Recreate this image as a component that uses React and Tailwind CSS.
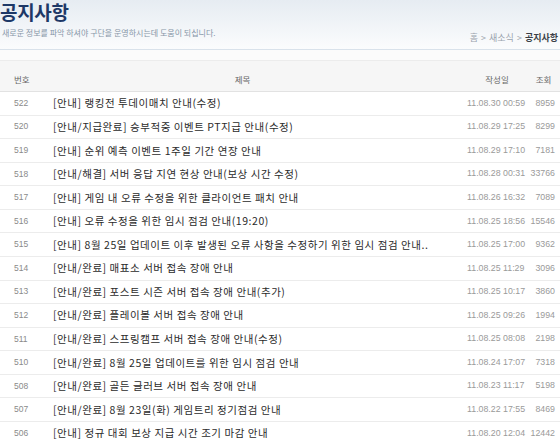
const rows = [
  ["522", "[안내] 랭킹전 투데이매치 안내(수정)", "11.08.30 00:59", "8959"],
  ["520", "[안내/지급완료] 승부적중 이벤트 PT지급 안내(수정)", "11.08.29 17:25", "8299"],
  ["519", "[안내] 순위 예측 이벤트 1주일 기간 연장 안내", "11.08.29 17:10", "7181"],
  ["518", "[안내/해결] 서버 응답 지연 현상 안내(보상 시간 수정)", "11.08.28 00:31", "33766"],
  ["517", "[안내] 게임 내 오류 수정을 위한 클라이언트 패치 안내", "11.08.26 16:32", "7089"],
  ["516", "[안내] 오류 수정을 위한 임시 점검 안내(19:20)", "11.08.25 18:56", "15546"],
  ["515", "[안내] 8월 25일 업데이트 이후 발생된 오류 사항을 수정하기 위한 임시 점검 안내..", "11.08.25 17:00", "9362"],
  ["514", "[안내/완료] 매표소 서버 접속 장애 안내", "11.08.25 11:29", "3096"],
  ["513", "[안내/완료] 포스트 시즌 서버 접속 장애 안내(추가)", "11.08.25 10:17", "3860"],
  ["512", "[안내/완료] 플레이볼 서버 접속 장애 안내", "11.08.25 09:26", "1994"],
  ["511", "[안내/완료] 스프링캠프 서버 접속 장애 안내(수정)", "11.08.25 08:08", "2198"],
  ["510", "[안내/완료] 8월 25일 업데이트를 위한 임시 점검 안내", "11.08.24 17:07", "7318"],
  ["508", "[안내/완료] 골든 글러브 서버 접속 장애 안내", "11.08.23 11:17", "5198"],
  ["507", "[안내/완료] 8월 23일(화) 게임트리 정기점검 안내", "11.08.22 17:55", "8469"],
  ["506", "[안내] 정규 대회 보상 지급 시간 조기 마감 안내", "11.08.20 12:04", "12442"],
];

const kr = { fontFamily: '"Noto Sans CJK KR", "Noto Sans", sans-serif' };
const num = { fontFamily: '"Liberation Sans", Arial, sans-serif' };

export default function App() {
  return (
    <div className="w-[560px] h-[443px] overflow-hidden bg-white" style={kr}>
      {/* top header */}
      <div className="bg-gradient-to-b from-[#e6ecf2] to-[#fbfcfd] h-[50px] border-b border-[#d9e2eb] relative">
        <h1 className="text-[19px] leading-[24px] font-bold text-[#1d3867] tracking-[-0.3px]">
          공지사항
        </h1>
        <p className="text-[8px] leading-[10px] text-[#8796a8] mt-[4px] ml-[2px]">
          새로운 정보를 파악 하셔야 구단을 운영하시는데 도움이 되십니다.
        </p>
        <div className="absolute right-[2px] top-[32px] text-[9px] leading-[12px] text-[#9aa3ad] flex gap-[3px]">
          <span>홈</span>
          <span>&gt;</span>
          <span>새소식</span>
          <span>&gt;</span>
          <span className="font-bold text-[#3a3f47]">공지사항</span>
        </div>
      </div>

      <div className="h-[10px] bg-[#fbfbfb]" />

      {/* table header */}
      <div className="h-[32px] bg-[#f6f6f6] border-t border-[#ececec] border-b border-b-[#e2e2e2] flex items-end pb-[7px] text-[8.5px] leading-[10px] text-[#666]">
        <div className="w-[53px] pl-[14px]">번호</div>
        <div className="flex-1 text-center pr-[35px]">제목</div>
        <div className="w-[60px] text-center">작성일</div>
        <div className="w-[33px] text-center">조회</div>
      </div>

      {/* rows */}
      <div>
        {rows.map(([no, title, date, views]) => (
          <div
            key={no}
            className="h-[23.57px] flex items-center border-b border-[#ececec]"
          >
            <div className="w-[53px] pl-[14px] text-[8.5px] text-[#8a8a8a]" style={num}>
              {no}
            </div>
            <div className="flex-1 text-[10.5px] text-[#2b2b2b] tracking-[0.55px] whitespace-nowrap overflow-hidden">
              {title}
            </div>
            <div className="w-[61px] text-[8.8px] text-[#9a9a9a] whitespace-nowrap" style={num}>
              {date}
            </div>
            <div className="w-[32px] pr-[5px] text-right text-[8.8px] text-[#9a9a9a]" style={num}>
              {views}
            </div>
          </div>
        ))}
      </div>
    </div>
  );
}
